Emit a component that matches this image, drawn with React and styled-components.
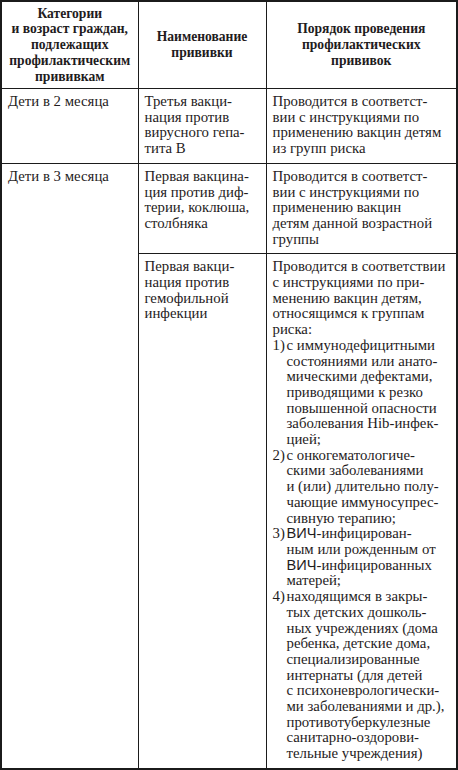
import React from 'react';
import styled, { createGlobalStyle } from 'styled-components';

const GlobalStyle = createGlobalStyle`
  html, body {
    margin: 0;
    padding: 0;
    background: #fff;
  }
`;

const lines = (text) => text.split('\n').map((l, i) => <Line key={i}>{l}</Line>);

const risks = [
  ['1)', 'с иммунодефицитными\nсостояниями или анато-\nмическими дефектами,\nприводящими к резко\nповышенной опасности\nзаболевания Hib-инфек-\nцией;'],
  ['2)', 'с онкогематологиче-\nскими заболеваниями\nи (или) длительно полу-\nчающие иммуносупрес-\nсивную терапию;'],
  ['3)', null],
  ['4)', 'находящимся в закры-\nтых детских дошколь-\nных учреждениях (дома\nребенка, детские дома,\nспециализированные\nинтернаты (для детей\nс психоневрологически-\nми заболеваниями и др.),\nпротивотуберкулезные\nсанитарно-оздорови-\nтельные учреждения)'],
];

export default function App() {
  return (
    <>
      <GlobalStyle />
      <Table>
        <colgroup>
          <col style={{ width: 137 }} />
          <col style={{ width: 128 }} />
          <col />
        </colgroup>
        <thead>
          <tr>
            <HeadCell>{lines('Категории\nи возраст граждан,\nподлежащих\nпрофилактическим\nпрививкам')}</HeadCell>
            <HeadCell>{lines('Наименование\nпрививки')}</HeadCell>
            <HeadCell>{lines('Порядок проведения\nпрофилактических\nпрививок')}</HeadCell>
          </tr>
        </thead>
        <tbody>
          <tr>
            <Cell>{lines('Дети в 2 месяца')}</Cell>
            <Cell>{lines('Третья вакци-\nнация против\nвирусного гепа-\nтита В')}</Cell>
            <Cell>{lines('Проводится в соответст-\nвии с инструкциями по\nприменению вакцин детям\nиз групп риска')}</Cell>
          </tr>
          <tr>
            <Cell rowSpan={2}>{lines('Дети в 3 месяца')}</Cell>
            <Cell>{lines('Первая вакцина-\nция против диф-\nтерии, коклюша,\nстолбняка')}</Cell>
            <Cell>{lines('Проводится в соответст-\nвии с инструкциями по\nприменению вакцин\nдетям данной возрастной\nгруппы')}</Cell>
          </tr>
          <tr>
            <Cell>{lines('Первая вакци-\nнация против\nгемофильной\nинфекции')}</Cell>
            <Cell>
              {lines('Проводится в соответствии\nс инструкциями по при-\nменению вакцин детям,\nотносящимся к группам\nриска:')}
              {risks.map(([num, text]) => (
                <Item key={num}>
                  <Num>{num}</Num>
                  <ItemText>
                    {text ? lines(text) : (
                      <>
                        <Line><Abbr>ВИЧ</Abbr>-инфицирован-</Line>
                        <Line>ным или рожденным от</Line>
                        <Line><Abbr>ВИЧ</Abbr>-инфицированных</Line>
                        <Line>матерей;</Line>
                      </>
                    )}
                  </ItemText>
                </Item>
              ))}
            </Cell>
          </tr>
        </tbody>
      </Table>
    </>
  );
}

const Table = styled.table`
  width: 458px;
  table-layout: fixed;
  border-collapse: collapse;
  border: 2px solid #1b1b1b;
  font-family: "Liberation Serif", "Times New Roman", serif;
  color: #1f1c1d;
`;

const HeadCell = styled.th`
  height: 86px;
  padding: 0 4px;
  border: 1px solid #1b1b1b;
  font-size: 13.6px;
  line-height: 15.8px;
  font-weight: bold;
  text-align: center;
  vertical-align: middle;
`;

const Cell = styled.td`
  padding: 5px 4px 6px 6px;
  border: 1px solid #1b1b1b;
  font-size: 14.8px;
  line-height: 15.7px;
  text-align: left;
  vertical-align: top;
`;

const Line = styled.span`
  display: block;
  white-space: nowrap;
`;

const Item = styled.div`
  display: flex;
`;

const Num = styled.span`
  flex: 0 0 14px;
  white-space: nowrap;
`;

const ItemText = styled.div`
  min-width: 0;
`;

const Abbr = styled.span`
  font-family: "Liberation Sans", "DejaVu Sans", sans-serif;
  font-size: 14.6px;
`;
